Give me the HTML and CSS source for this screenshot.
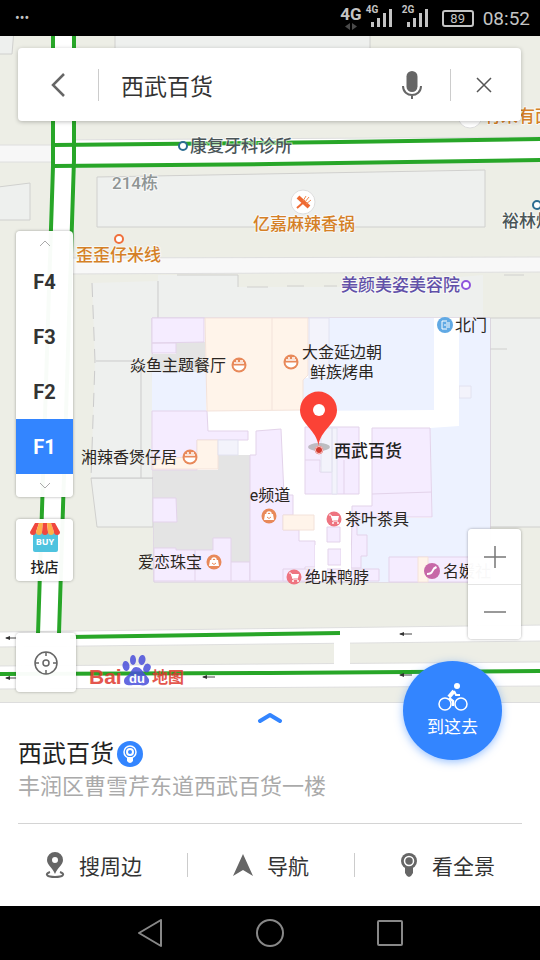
FILE: index.html
```html
<!DOCTYPE html>
<html lang="zh-CN">
<head>
<meta charset="utf-8">
<meta name="viewport" content="width=device-width, initial-scale=1">
    <title>西武百货</title>
    <link rel="stylesheet" href="styles.css">
</head>
<body>
    <header class="status-bar">
        <span class="dots">•••</span>
        <div class="status-right">
            <div class="network">
                <span>4G</span>
                <svg width="12" height="7" viewBox="0 0 12 7"><path d="M5 0v7L0 3.500zM7 0v7l5-3.500z" fill="#4a4a4a"/></svg>
            </div>
            <div class="signal">
                <span>4G</span>
                <svg width="22" height="18" viewBox="0 0 22 18"><path d="M1 13h3v5H1zM7 9h3v9H7zM13 4h3v14h-3zM19 0h3v18h-3z" fill="#c4c4c4"/></svg>
            </div>
            <div class="signal second">
                <span>2G</span>
                <svg width="22" height="18" viewBox="0 0 22 18"><path d="M1 13h3v5H1zM7 9h3v9H7zM13 4h3v14h-3zM19 0h3v18h-3z" fill="#c4c4c4"/></svg>
            </div>
            <div class="battery">89</div>
            <time>08:52</time>
        </div>
    </header>

    <main class="map">
        <svg class="map-canvas" viewBox="0 36 540 666" preserveAspectRatio="xMidYMid slice">
            <defs>
                <g id="food">
                    <circle r="7.500" fill="#e8895a"/>
                    <path d="M-5.500 0.500h11a5.500 5 0 0 1-11 0z" fill="#fff"/>
                    <path d="M-5 -2h10M-3 -4h2M1 -4h3" stroke="#fff" stroke-width="1.500"/>
                </g>
                <g id="bag">
                    <circle r="7.500" fill="#e8895a"/>
                    <path d="M-2 -1v-1a2 2 0 0 1 4 0v1" fill="none" stroke="#fff" stroke-width="1.500"/>
                    <path d="M-4 -2h8l1 6h-10z" fill="#fff"/>
                    <path d="M-2 1q2 3 4 0" fill="none" stroke="#e8895a"/>
                </g>
                <g id="cart">
                    <circle r="7.500" fill="#ee7480"/>
                    <path d="M-5 -4h2l2 6h5" fill="none" stroke="#fff"/>
                    <path d="M-3 -3h8l-1 4h-5z" fill="#fff"/>
                    <circle cx="-1" cy="4" r="1" fill="#fff"/>
                    <circle cx="4" cy="4" r="1" fill="#fff"/>
                </g>
                <g id="arrow">
                    <path d="M1 0h12" stroke="#444"/>
                    <path d="M0 0l5-2v4z" fill="#333"/>
                </g>
            </defs>

            <rect y="36" width="540" height="666" fill="#edeee6"/>

            <!-- buildings -->
            <g fill="#eef0ee" stroke="#d0d0ce">
                <path d="M115 30H370V60H115zM-2 30H14L12 54H-2z"/>
                <path d="M-2 187L30 183V220H-2z"/>
                <path d="M97 177L485 170V227H97z"/>
                <path d="M153 478V527H97L91 478z"/>
                <path d="M158 318V275H238V287H337L483 275V318z" stroke="none"/>
                <path d="M177 275H238V287M247 287H268M287 286H304M324 286H337M504 275H524" fill="none"/>
                <path d="M490 318H545V527H490zM490 349H507"/>
            </g>
            <path d="M92 283L158 281V318H152V478H91L95 361z" fill="#eef0ee"/>
            <path d="M92 283L95 361 91 478" fill="none" stroke="#cbcbcb" stroke-dasharray="14 8"/>
            <path d="M158 281V318M96 361H141V478M91 478H153" fill="none" stroke="#cbcbcb"/>

            <!-- side roads -->
            <path d="M-2 145H54V162H-2z" fill="#f7f7f7" stroke="#dedede"/>
            <path d="M60 258L545 257V272L60 274z" fill="#f8f8f8" stroke="#dedede"/>

            <!-- shopping centre, ground floor -->
            <path d="M152 318H490V582H154z" fill="#fff" stroke="#d8cbe0"/>
            <g fill="#e4e4e4">
                <path d="M176 342H205L206 372H152V354H176z"/>
                <path d="M153 470H218V455H250V581H154z"/>
            </g>
            <g fill="#edf2ff">
                <path d="M152 372H206V411H152z"/>
                <path d="M329 318H434V410L303 411V378H329z"/>
                <path d="M459 318H490V582H361V557H357V518H432L430 428 459 426z"/>
            </g>
            <g fill="#f5ecff" stroke="#e3d3ea">
                <path d="M152 318H204V342L152 343zM152 343H176V353H152z"/>
                <path d="M152 411H207L208 431H248V440H197V470H152z"/>
                <path d="M153 498H176L177 522H153z"/>
                <path d="M154 548H176V550H213V538H231V562H250V581H154zM195 550V581M231 562V581"/>
                <path d="M256 431L281 429 284 495H293V515H283V530H299V541H315V567H305V581H250V455H256z"/>
                <path d="M305 427H359V494H305zM305 460H320V472H332M344 460V494"/>
                <path d="M372 428H430L432 517H352V506H372zM372 494L432 492"/>
                <path d="M327 527H340V542H327zM328 549H341V565H328z"/>
                <path d="M352 518H357V535H367V556H361V568H351z"/>
                <path d="M283 569H379V581H283zM389 557H490V582H389z"/>
            </g>
            <g fill="#fff4ea" stroke="#f3e2da">
                <path d="M205 318H308V375L303 380V410L207 411zM272 318V410"/>
                <path d="M197 440H218V469H153V460L197 456z"/>
                <path d="M283 515H314V530H283zM418 557H428V582H418z"/>
            </g>
            <g fill="#f3f3fb" stroke="#e2e2f0">
                <path d="M309 318H329V378H309zM218 440H238V455H218z"/>
                <path d="M321 428H332V472H321zM332 428H337V494H332zM459 386H471V398H459z"/>
            </g>
            <path d="M315 545H327V581H315zM341 545H351V581H341z" fill="#fff"/>
            <path d="M434 318H459V426H434z" fill="#fff"/>

            <!-- main roads -->
            <path d="M53 140L545 137V160L53 166z" fill="#fff" stroke="#dedede"/>
            <path d="M51 30H76V166L61 640H36L51 166z" fill="#fff"/>
            <path d="M-2 632L545 625V641L-2 647z" fill="#fff" stroke="#dedede"/>
            <path d="M-2 666L545 662V686L-2 689z" fill="#fff" stroke="#dedede"/>
            <path d="M334 640H350V666H334z" fill="#fff"/>
            <g fill="none" stroke="#28a628" stroke-width="4">
                <path d="M53 30V166L38 634M74 30V160L59 634"/>
                <path d="M55 145L340 142 545 139M54 166L270 164 545 160"/>
                <path d="M70 637L340 633M-2 674L270 673 545 671"/>
            </g>
            <use href="#arrow" x="5" y="638"/>
            <use href="#arrow" x="5" y="678"/>
            <use href="#arrow" x="202" y="677"/>
            <use href="#arrow" x="399" y="634"/>
            <use href="#arrow" x="399" y="675"/>

            <!-- street places -->
            <g class="street">
                <circle cx="470" cy="116" r="12" fill="#fff" stroke="#ddd"/>
                <text x="484" y="122" class="orange">有未有面</text>
                <circle cx="183" cy="146" r="4" class="dot blue"/>
                <text x="190" y="152" class="slate">康复牙科诊所</text>
                <text x="112" y="189" class="grey">214栋</text>
                <circle cx="303" cy="202" r="12" fill="#fff" stroke="#ddd"/>
                <path d="M298 197l11 10" stroke="#ef6a32" stroke-width="4"/>
                <path d="M297 208l8-7" stroke="#ef6a32" stroke-width="2"/>
                <path d="M303 201l3-5M305 202l4-5M306 204l5-4" stroke="#ef8a52"/>
                <text x="304" y="230" text-anchor="middle" class="orange">亿嘉麻辣香锅</text>
                <circle cx="119" cy="239" r="4" class="dot red"/>
                <text x="76" y="261" class="orange">歪歪仔米线</text>
                <circle cx="537" cy="205" r="4" class="dot blue"/>
                <text x="502" y="227" class="slate">裕林炖</text>
                <text x="460" y="291" text-anchor="end" class="violet">美颜美姿美容院</text>
                <circle cx="466" cy="285" r="4" class="dot purple"/>
            </g>

            <!-- shops -->
            <g class="shops">
                <circle cx="445" cy="325" r="8" fill="#60a9e4"/>
                <path d="M447 321h-5v8h5M444 325h6M446 323h4M446 327h4" fill="none" stroke="#fff"/>
                <text x="455" y="331">北门</text>
                <text x="130" y="371">焱鱼主题餐厅</text>
                <use href="#food" x="239" y="365"/>
                <use href="#food" x="291" y="362"/>
                <text x="342" y="358" text-anchor="middle">大金延边朝</text>
                <text x="342" y="378" text-anchor="middle">鲜族烤串</text>
                <text x="81" y="463">湘辣香煲仔居</text>
                <use href="#food" x="190" y="457"/>
                <text x="270" y="501" text-anchor="middle">e频道</text>
                <use href="#bag" x="269" y="516"/>
                <use href="#cart" x="334" y="519"/>
                <text x="345" y="525">茶叶茶具</text>
                <text x="138" y="568">爱恋珠宝</text>
                <use href="#bag" x="214" y="562"/>
                <use href="#cart" x="294" y="577"/>
                <text x="305" y="583">绝味鸭脖</text>
                <circle cx="432" cy="571" r="8" fill="#c768a8"/>
                <path d="M427 573q4 0 5-3t4-4l1 2q-3 1-4 4t-6 3z" fill="#fff"/>
                <text x="443" y="577">名媛社</text>
            </g>

            <!-- selected place -->
            <ellipse cx="319" cy="447" rx="11" ry="4" fill="#999" opacity=".6"/>
            <path d="M318.500 446C317 430 300 424 300 410a18.500 18.500 0 0 1 37 0C337 424 320 430 318.500 446z" fill="#fb4236"/>
            <circle cx="319" cy="410" r="6" fill="#fff"/>
            <circle cx="319" cy="450" r="4" fill="#fff" stroke="#e99"/>
            <circle cx="319" cy="450" r="3" fill="#d33a30"/>
            <text x="334" y="457" class="selected">西武百货</text>

            <!-- logo -->
            <g class="logo">
                <text x="89" y="684" class="logo-bai">Bai</text>
                <g fill="#4a4fdb">
                    <ellipse cx="126" cy="666" rx="3.500" ry="5" transform="rotate(-10 126 666)"/>
                    <ellipse cx="133" cy="660" rx="3" ry="5"/>
                    <ellipse cx="142" cy="660" rx="3.500" ry="5" transform="rotate(10 142 660)"/>
                    <ellipse cx="147" cy="668" rx="3.500" ry="4.500" transform="rotate(25 147 668)"/>
                    <path d="M136 667c4 0 6 3 8 6s6 5 5 9c-1 3-5 4-9 3h-7c-5 1-9 0-9-4s4-5 6-8 3-6 6-6z"/>
                </g>
                <text x="137" y="683" text-anchor="middle" class="logo-du">du</text>
                <text x="152" y="683" class="logo-map">地图</text>
            </g>
        </svg>

        <form class="search">
            <button type="button" class="back" aria-label="返回">
                <svg width="16" height="26" viewBox="0 0 16 26"><path d="M14 2L3 13l11 11" fill="none" stroke="#666" stroke-width="2.500"/></svg>
            </button>
            <input type="text" value="西武百货" aria-label="搜索">
            <button type="button" class="mic" aria-label="语音">
                <svg width="20" height="30" viewBox="0 0 20 30"><rect x="4.500" y="1" width="11" height="21" rx="5.500" fill="#666"/><path d="M1 16c0 12 18 12 18 0M10 25v4" fill="none" stroke="#666" stroke-width="2"/></svg>
            </button>
            <button type="button" class="clear" aria-label="清除">
                <svg width="18" height="18" viewBox="0 0 18 18"><path d="M2 2l14 14M16 2L2 16" stroke="#555" stroke-width="1.500"/></svg>
            </button>
        </form>

        <div class="controls">
            <div class="left">
                <div class="floors">
                    <button type="button" class="floor-up" aria-label="上">
                        <svg width="12" height="8" viewBox="0 0 12 8"><path d="M1 7l5-5 5 5" fill="none" stroke="#aaa"/></svg>
                    </button>
                    <button type="button">F4</button>
                    <button type="button">F3</button>
                    <button type="button">F2</button>
                    <button type="button" class="active">F1</button>
                    <button type="button" class="floor-down" aria-label="下">
                        <svg width="12" height="8" viewBox="0 0 12 8"><path d="M1 1l5 5 5-5" fill="none" stroke="#aaa"/></svg>
                    </button>
                </div>
                <button type="button" class="find-shop">
                    <svg width="32" height="30" viewBox="0 0 32 30">
                        <path d="M4 9h25v18q0 2-2 2H6q-2 0-2-2z" fill="#4fc3df"/>
                        <path d="M6 0h4L7 9q0 3-3 3t-3-3z" fill="#f0473e"/>
                        <path d="M10 0h4l-1 9q0 3-3 3t-3-3z" fill="#ffb04a"/>
                        <path d="M14 0h4l1 9q0 3-3 3t-3-3z" fill="#f0473e"/>
                        <path d="M18 0h4l3 9q0 3-3 3t-3-3z" fill="#ffb04a"/>
                        <path d="M22 0h4l5 9q0 3-3 3t-3-3z" fill="#f0473e"/>
                        <text x="16" y="22" text-anchor="middle" class="buy">BUY</text>
                    </svg>
                    <span>找店</span>
                </button>
                <button type="button" class="locate" aria-label="定位">
                    <svg width="24" height="24" viewBox="0 0 24 24" fill="none" stroke="#666" stroke-width="1.500"><circle cx="12" cy="12" r="11"/><circle cx="12" cy="12" r="3"/><path d="M12 1v4M12 19v4M1 12h4M19 12h4"/></svg>
                </button>
            </div>
            <div class="zoom">
                <button type="button" aria-label="放大">
                    <svg width="22" height="22" viewBox="0 0 22 22"><path d="M0 11h22M11 0v22" stroke="#777" stroke-width="1.500"/></svg>
                </button>
                <button type="button" aria-label="缩小">
                    <svg width="22" height="22" viewBox="0 0 22 22"><path d="M0 11h22" stroke="#777" stroke-width="1.500"/></svg>
                </button>
            </div>
        </div>
    </main>

    <section class="panel">
        <button type="button" class="expand" aria-label="展开">
            <svg width="26" height="12" viewBox="0 0 26 12"><path d="M3 10l10-6 10 6" fill="none" stroke="#3385ff" stroke-width="4" stroke-linecap="round" stroke-linejoin="round"/></svg>
        </button>
        <button type="button" class="go">
            <svg width="30" height="28" viewBox="0 0 30 28" fill="none" stroke="#fff" stroke-width="1.500">
                <circle cx="7" cy="21" r="6"/>
                <circle cx="23" cy="21" r="6"/>
                <circle cx="19" cy="3" r="3" fill="#fff" stroke="none"/>
                <path d="M15 23v-5l-4-3" stroke-width="2.500"/>
                <path d="M11 14l5-6" stroke-width="4"/>
                <path d="M16 8l2 4h4" stroke-width="2"/>
            </svg>
            <span>到这去</span>
        </button>
        <div class="place">
            <h1>西武百货
                <svg width="26" height="26" viewBox="0 0 26 26"><circle cx="13" cy="13" r="13" fill="#3385ff"/><circle cx="13" cy="11" r="6" fill="none" stroke="#fff" stroke-width="1.500"/><circle cx="13" cy="11" r="3" fill="none" stroke="#fff" stroke-width="2"/><path d="M10 16h6v4q-3 4-6 0z" fill="#fff"/></svg>
            </h1>
            <p>丰润区曹雪芹东道西武百货一楼</p>
        </div>
        <div class="actions">
            <a href="#">
                <svg width="20" height="26" viewBox="0 0 20 26"><path d="M10 0a8 8 0 0 1 8 8c0 5-5 7-8 14C7 15 2 13 2 8a8 8 0 0 1 8-8zm0 5a3 3 0 1 0 0 6 3 3 0 0 0 0-6z" fill="#666"/><path d="M5 20c-6 2-3 5 5 5s11-3 5-5" fill="none" stroke="#666" stroke-width="2"/></svg>
                搜周边
            </a>
            <i></i>
            <a href="#">
                <svg width="20" height="22" viewBox="0 0 20 22"><path d="M10 0l10 22-10-6-10 6z" fill="#666"/></svg>
                导航
            </a>
            <i></i>
            <a href="#">
                <svg width="18" height="26" viewBox="0 0 18 26"><path d="M5 15h8v6l-2 3-2 1-2-1-2-3z" fill="#666"/><circle cx="9" cy="9" r="8" fill="#666"/><circle cx="9" cy="9" r="4.500" fill="none" stroke="#fff" stroke-width="1.500"/></svg>
                看全景
            </a>
        </div>
    </section>

    <nav class="nav-bar">
        <button type="button" aria-label="后退">
            <svg width="28" height="28" viewBox="0 0 28 28"><path d="M25 1v26L3 14z"/></svg>
        </button>
        <button type="button" aria-label="主页">
            <svg width="28" height="28" viewBox="0 0 28 28"><circle cx="14" cy="14" r="13"/></svg>
        </button>
        <button type="button" aria-label="多任务">
            <svg width="28" height="28" viewBox="0 0 28 28"><rect x="2" y="2" width="24" height="24" rx="1"/></svg>
        </button>
    </nav>
</body>
</html>
```
FILE: styles.css
```css
* {
    box-sizing: border-box;
}
body {
    margin: 0;
    min-height: 100vh;
    display: flex;
    flex-direction: column;
    background: #fff;
    color: #333;
    font-family: Roboto, "Noto Sans CJK SC", sans-serif;
}
button {
    margin: 0;
    padding: 0;
    border: 0;
    background: none;
    color: inherit;
    font-family: inherit;
    display: flex;
    align-items: center;
    justify-content: center;
}
svg {
    display: block;
    flex: none;
}

/* status bar */
.status-bar {
    height: 36px;
    padding: 0 10px 0 15px;
    display: flex;
    align-items: center;
    justify-content: space-between;
    background: #000;
    color: #c4c4c4;
}
.dots {
    font-size: 14px;
}
.status-right {
    display: flex;
    align-items: center;
}
.network {
    display: flex;
    flex-direction: column;
    align-items: center;
    font-size: 17px;
    line-height: 17px;
    font-weight: bold;
}
.signal {
    position: relative;
    padding-left: 8px;
}
.signal.second {
    margin-left: 6px;
}
.signal span {
    position: absolute;
    left: 4px;
    top: -4px;
    font-size: 10px;
    line-height: 10px;
    font-weight: bold;
}
.battery {
    width: 32px;
    height: 17px;
    margin: 0 9px 0 14px;
    border: 2px solid #c4c4c4;
    border-radius: 3px;
    font-size: 13px;
    line-height: 13px;
    text-align: center;
}
.status-bar time {
    font-size: 19px;
}

/* map */
.map {
    position: relative;
    flex: 1;
    display: flex;
    flex-direction: column;
    padding: 12px 19px 10px 16px;
}
.map-canvas {
    position: absolute;
    left: 0;
    top: 0;
    width: 100%;
    height: 100%;
}
.street text {
    font-size: 17px;
    font-weight: 500;
    stroke: rgba(255, 255, 255, .6);
    stroke-width: 2px;
    paint-order: stroke;
}
.orange {
    fill: #d58026;
}
.slate {
    fill: #4a5558;
}
.grey {
    fill: #8f9594;
}
.violet {
    fill: #6150a8;
}
.dot {
    fill: #fff;
    stroke-width: 2px;
}
.dot.blue {
    stroke: #2b6c91;
}
.dot.red {
    stroke: #f0703c;
}
.dot.purple {
    stroke: #8f55dc;
}
.shops text {
    font-size: 16px;
    fill: #2b2622;
}
.selected {
    font-size: 17px;
    font-weight: 500;
    fill: #222;
}
.logo {
    opacity: .85;
}
.logo-bai {
    font-family: "Liberation Sans", sans-serif;
    font-size: 21px;
    font-weight: bold;
    fill: #e0392f;
}
.logo-du {
    font-family: "Liberation Sans", sans-serif;
    font-size: 13px;
    font-weight: bold;
    fill: #fff;
}
.logo-map {
    font-size: 16px;
    font-weight: bold;
    fill: #e0392f;
}

.search {
    position: relative;
    display: flex;
    align-items: center;
    height: 73px;
    margin-left: 2px;
    background: #fff;
    border-radius: 4px;
    box-shadow: 0 1px 4px rgba(0, 0, 0, .25);
}
.search input {
    flex: 1;
    min-width: 0;
    padding: 0 0 0 22px;
    border: 0;
    outline: 0;
    background: none;
    color: #333;
    font-family: inherit;
    font-size: 23px;
}
.back {
    width: 81px;
    height: 32px;
    border-right: 1px solid #ccc;
}
.mic {
    width: 78px;
    height: 32px;
    border-right: 1px solid #ccc;
}
.clear {
    width: 70px;
    height: 32px;
    padding-right: 4px;
}

.controls {
    position: relative;
    flex: 1;
    display: flex;
    align-items: flex-end;
    justify-content: space-between;
}
.left {
    display: flex;
    flex-direction: column;
    align-items: flex-start;
}
.floors,
.find-shop,
.locate,
.zoom {
    background: rgba(255, 255, 255, .97);
    border-radius: 4px;
    box-shadow: 0 0 3px rgba(0, 0, 0, .35);
}
.floors {
    width: 57px;
    margin-bottom: 22px;
    overflow: hidden;
}
.floors button {
    width: 100%;
    height: 55px;
    font-size: 20px;
    font-weight: bold;
}
.floors .floor-up,
.floors .floor-down {
    height: 23px;
}
.floors .active {
    background: #3385ff;
    color: #fff;
}
.find-shop {
    flex-direction: column;
    width: 57px;
    height: 62px;
    margin-bottom: 52px;
    font-size: 14px;
    line-height: 20px;
    font-weight: 500;
    color: #222;
}
.find-shop span {
    margin-top: 4px;
}
.buy {
    font-family: "Open Sans", sans-serif;
    font-size: 9px;
    font-weight: bold;
    fill: #fff;
}
.locate {
    width: 60px;
    height: 59px;
}
.zoom {
    width: 53px;
    margin-bottom: 53px;
}
.zoom button {
    width: 100%;
    height: 55px;
}
.zoom button + button {
    border-top: 1px solid #e4e4e4;
}

/* place panel */
.panel {
    position: relative;
    background: #fff;
    border-top: 1px solid #ddd;
}
.expand {
    width: 100%;
    height: 27px;
}
.go {
    position: absolute;
    right: 38px;
    top: -42px;
    width: 99px;
    height: 99px;
    flex-direction: column;
    border-radius: 50%;
    background: #3385ff;
    box-shadow: 0 2px 8px rgba(51, 133, 255, .5);
    color: #fff;
    font-size: 17px;
    line-height: 24px;
}
.go span {
    margin-top: 4px;
}
.place {
    margin: 0 18px;
    padding: 7px 0 20px;
    border-bottom: 1px solid #d4d4d4;
}
.place h1 {
    display: flex;
    align-items: center;
    gap: 3px;
    margin: 0;
    font-size: 24px;
    line-height: 34px;
    font-weight: 400;
    color: #222;
}
.place p {
    margin: 0;
    font-size: 22px;
    line-height: 32px;
    color: #aaa;
}
.actions {
    display: flex;
    align-items: center;
    justify-content: space-evenly;
    height: 82px;
}
.actions a {
    display: flex;
    align-items: center;
    gap: 14px;
    color: #333;
    font-size: 21px;
    text-decoration: none;
}
.actions i {
    width: 1px;
    height: 24px;
    background: #ccc;
}

/* system buttons */
.nav-bar {
    display: flex;
    align-items: center;
    justify-content: center;
    gap: 92px;
    height: 54px;
    background: #000;
}
.nav-bar svg {
    fill: none;
    stroke: #888;
    stroke-width: 2px;
    stroke-linejoin: round;
}
```
